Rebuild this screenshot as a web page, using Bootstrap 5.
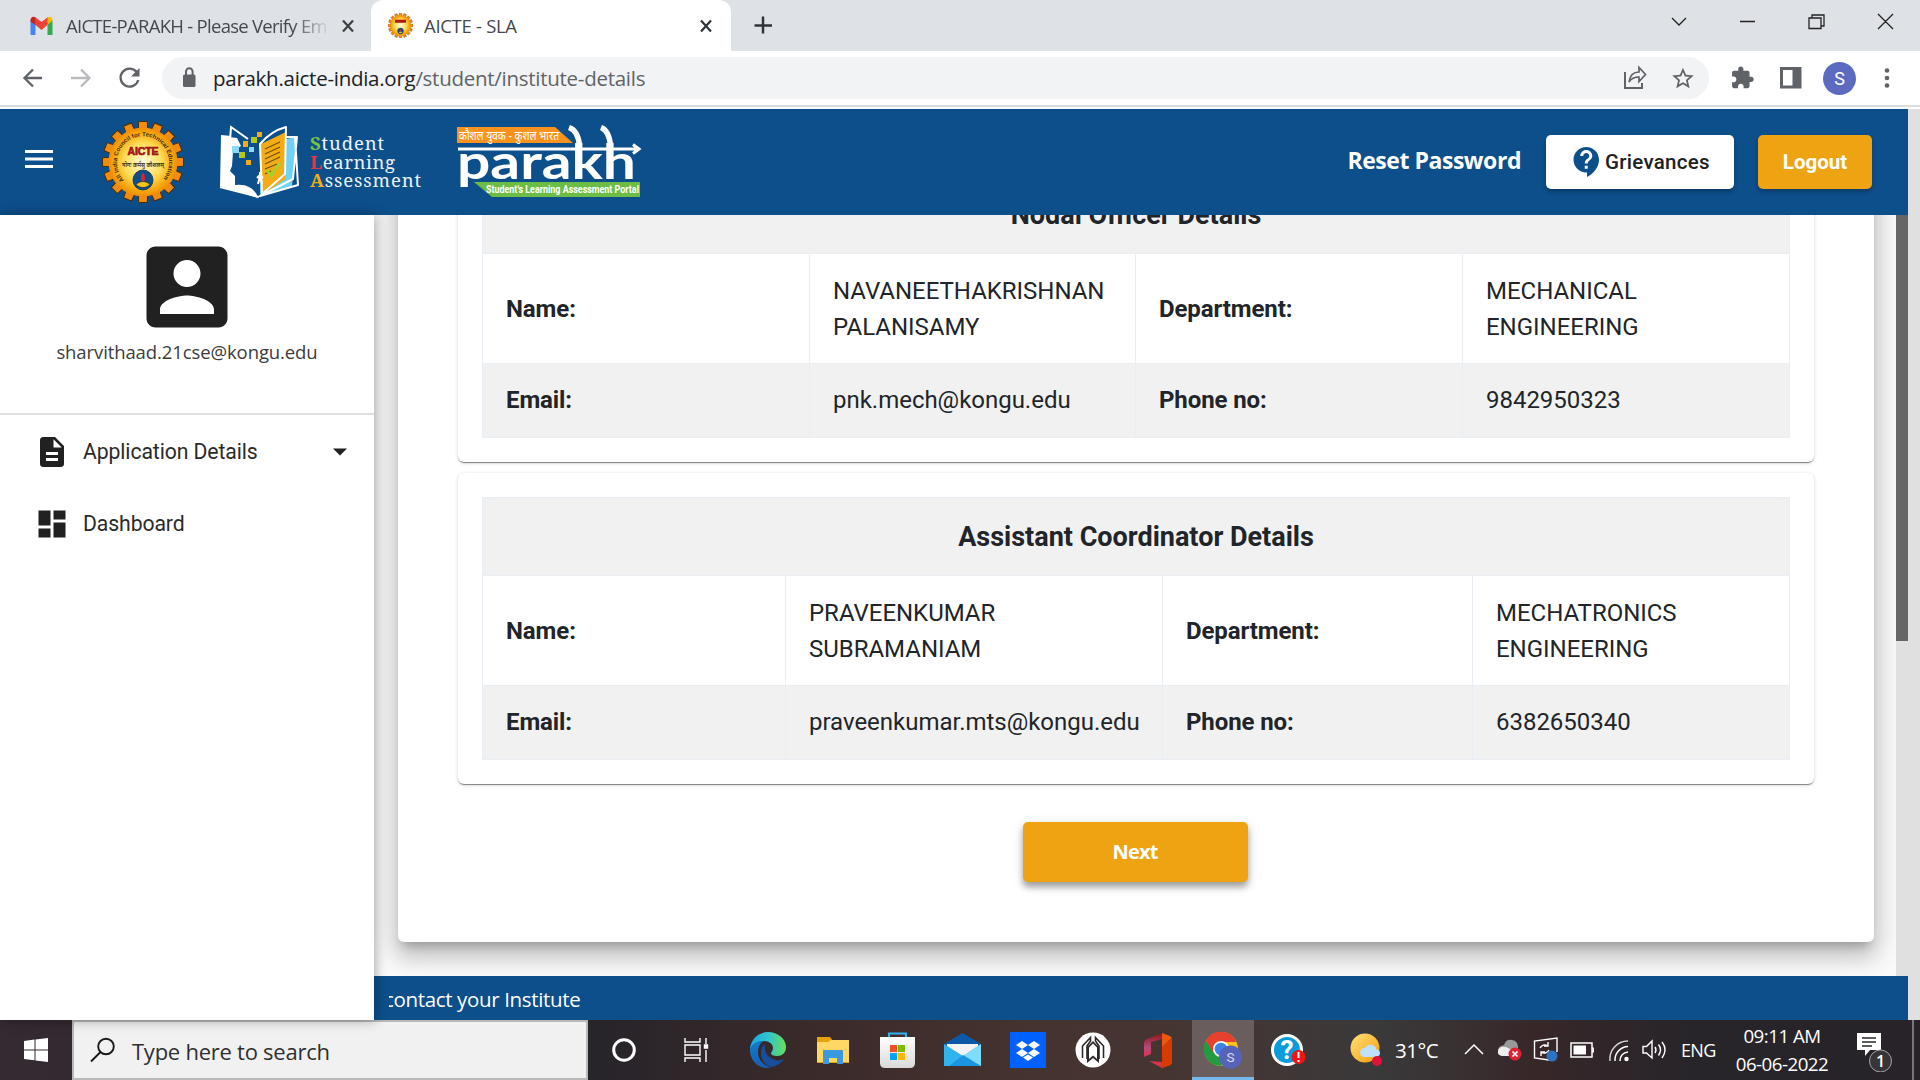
<!DOCTYPE html>
<html lang="en">
<head>
<meta charset="utf-8">
<title>AICTE - SLA</title>
<link href="https://cdn.jsdelivr.net/npm/bootstrap@5.3.0/dist/css/bootstrap.min.css" rel="stylesheet">
<script src="https://cdn.jsdelivr.net/npm/bootstrap@5.3.0/dist/js/bootstrap.bundle.min.js"></script>
<style>
body{width:1920px;height:1080px;overflow:hidden;font-family:Roboto,sans-serif;color:#212529;background:#fff}
svg{display:block;flex:none}
.seg{font-family:"Open Sans","Noto Sans",sans-serif}
.tabs-strip{height:51px;background:#dee1e6;font-size:18.5px;color:#45494d}
.tab-first{width:371px;padding-left:29px}
.tab-first .ttl{width:264px;margin-left:12px;letter-spacing:-.72px;overflow:hidden;-webkit-mask-image:linear-gradient(90deg,#000 86%,transparent)}
.tab-active{width:360px;background:#fff;border-radius:12px 12px 0 0;padding-left:17px}
.tab-active .ttl{margin-left:11px;letter-spacing:-.3px;width:274px}
.toolbar-row{height:54px;padding-left:19px}
.omni{width:1547px;height:42px;border-radius:21px;background:#f1f3f4;margin-left:18px;font-size:20.5px;letter-spacing:-.27px;color:#5f6368}
.omni b{font-weight:400;color:#202124}
.avatar-s{width:33px;height:33px;background:#5c6bc0;color:#fff;font-size:18px;font-family:Roboto,sans-serif}
.page-edge{height:4px;border-top:2px solid #dadcdb}
.page{height:911px}
.app{width:1908px}
.gutter{width:12px;background:#e0e0e0}
.topbar{height:106px;background:#0d4f8b}
.reset{font-size:23px;font-weight:700;color:#fff;letter-spacing:-.45px;padding-bottom:4px}
.hbtn{height:54px;border-radius:5px;border:0;font-size:20.5px;font-weight:500;box-shadow:0 3px 4px rgba(0,0,0,.25)}
.amber{background:#eea312;color:#fff}
.side{width:374px;background:#fff;box-shadow:1px 0 12px rgba(0,0,0,.35);z-index:2}
.profile{height:200px;border-bottom:2px solid #e0e0e0;padding-top:18px}
.profile div{font-size:18.5px;color:#3c3c3c;letter-spacing:-.1px;margin-top:-3px}
.nav-entry{height:72px;padding:2px 0 0 34px;font-size:21.2px;color:#2b2b2b;letter-spacing:-.1px;line-height:1}
.main-col{width:1534px}
.scroller{width:1522px;height:761px;overflow:hidden;background:#fafafa;padding:0 22px 34px 24px}
.sheet{flex:none;background:#fff;border-radius:6px;padding:60px;box-shadow:0 9px 10px -5px rgba(0,0,0,.2),0 15px 21px 2px rgba(0,0,0,.14),0 6px 28px 5px rgba(0,0,0,.12)}
.panel{padding:24px;border-radius:6px;box-shadow:0 2px 1px -1px rgba(0,0,0,.3),0 1px 1px rgba(0,0,0,.2),0 1px 4px rgba(0,0,0,.14)}
.panel+.panel{margin-top:11px}
.info{width:1307px;table-layout:fixed;border-collapse:collapse;font-size:24px;line-height:36px;margin:0;letter-spacing:-.02px}
.info td,.info th{border:1px solid #e9eef5;padding:19px 22px 18px 23px;vertical-align:middle;font-weight:400}
.info th{font-weight:700;letter-spacing:-.1px}
.info .head th{font-size:27px;text-align:center;padding:21px 0 20px;letter-spacing:0}
.info .gray>*{background:#f1f1f1}
.info tr.gray:last-child>*{padding-top:18px;padding-bottom:19px}
.next{width:225px;height:60px;border-radius:5px;border:0;margin-top:38px;font-size:20px;font-weight:700;letter-spacing:-.8px;box-shadow:0 5px 6px rgba(0,0,0,.32),0 3px 14px rgba(0,0,0,.12);transform:translateX(-1px)}
.track{width:12px;background:#e0e0e0}
.thumb{height:426px;background:#666}
.foot{height:44px;background:#0d4f8b;color:#fff;font-size:20.5px;letter-spacing:-.35px;padding:2px 0 0 15px}
.foot .clip{width:400px;overflow:hidden;white-space:nowrap}
.foot .clip span{margin-left:-5px}
.taskbar{height:60px;background:linear-gradient(90deg,#352a31 0,#27242a 31%,#3a2a2a 42%,#45332f 54%,#453533 62%,#3a393a 72%,#372729 80%,#28252a 88%,#272329 100%);color:#fff}
.start{width:72px}
.find{width:516px;height:60px;background:#f1f1f1;border:2px solid #b9b9b9;color:#2f2f2f;font-size:22px;letter-spacing:-.25px;padding-left:16px}
.slot{width:65px;height:60px}
.slot.on{width:62px;margin:0 1px 0 2px;background:#695d5d;border-bottom:3px solid #76b9ed}
.tray{font-size:19px}
.clock{font-size:18.7px;line-height:28px;letter-spacing:-.5px;width:112px}
</style>
</head>
<body>
<svg width="0" height="0" class="position-absolute">
<defs>
<radialGradient id="gold"><stop offset="0" stop-color="#fffbe0"/><stop offset=".55" stop-color="#ffdc55"/><stop offset=".85" stop-color="#f7a70c"/><stop offset="1" stop-color="#ee8c0a"/></radialGradient>
<linearGradient id="edgeA" x1="0" x2="1"><stop offset="0" stop-color="#1ca7dd"/><stop offset=".5" stop-color="#2fc3cf"/><stop offset="1" stop-color="#6be05a"/></linearGradient>
<linearGradient id="edgeB" y2="1" x2="0"><stop stop-color="#0f7dd2"/><stop offset="1" stop-color="#1a5cb0"/></linearGradient>
<linearGradient id="bag" x2="0" y2="1"><stop stop-color="#fff"/><stop offset="1" stop-color="#d9d9d9"/></linearGradient>
<linearGradient id="sun" x2="1" y2="1"><stop stop-color="#ffe27a"/><stop offset="1" stop-color="#f79a0a"/></linearGradient>
<linearGradient id="off" x2="0" y2="1"><stop stop-color="#8e1414"/><stop offset=".6" stop-color="#b54a7c"/><stop offset="1" stop-color="#d8334a"/></linearGradient>
<g id="gear">
<g fill="#f08c10" stroke="#4a2c08" stroke-width="1">
<path id="tooth" d="M-4.800-31-4.300-40.500H4.300L4.800-31z"/>
<use href="#tooth" transform="rotate(22.500)"/><use href="#tooth" transform="rotate(45)"/><use href="#tooth" transform="rotate(67.500)"/><use href="#tooth" transform="rotate(90)"/><use href="#tooth" transform="rotate(112.500)"/><use href="#tooth" transform="rotate(135)"/><use href="#tooth" transform="rotate(157.500)"/><use href="#tooth" transform="rotate(180)"/><use href="#tooth" transform="rotate(202.500)"/><use href="#tooth" transform="rotate(225)"/><use href="#tooth" transform="rotate(247.500)"/><use href="#tooth" transform="rotate(270)"/><use href="#tooth" transform="rotate(292.500)"/><use href="#tooth" transform="rotate(315)"/><use href="#tooth" transform="rotate(337.500)"/>
</g>
<circle r="34.500" fill="url(#gold)"/>
<circle cy="18" r="10" fill="#0d4f8b" stroke="#0a2c52" stroke-width=".8"/>
<path d="M0 10.500c3 4 2 7 1.200 9.500h-2.400C-2 17.500-3 14.500 0 10.500z" fill="#e0202a"/><path d="M-7 22.500c4-4 10-4 14 0-4 4-10 4-14 0z" fill="#f3c21b" stroke="#222" stroke-width=".6"/>
</g>
</defs>
</svg>

<!-- browser tabs -->
<div class="tabs-strip seg d-flex">
  <div class="tab-first d-flex align-items-center">
    <svg width="25" height="20" viewBox="0 0 25 20"><path d="M1.500 19V4l5 3.500V19z" fill="#4285f4"/><path d="M18.500 7.500l5-3.500v15h-5z" fill="#34a853"/><path d="M1.500 4.500C1.500 1 4.500 0 6.500 1.500V9l-5-3.500z" fill="#c5221f"/><path d="M6 1l6.500 5L19 1v7.500L12.500 14 6 8.500z" fill="#ea4335"/><path d="M18.500 1.500c2-1.500 5-.5 5 3l-5 4.500z" fill="#fbbc04"/></svg>
    <div class="ttl text-nowrap">AICTE-PARAKH - Please Verify Em</div>
    <svg class="ms-2" width="20" height="20" stroke="#3c4043" stroke-width="2.200"><path d="M5 4.500 15 15.500M15 4.500 5 15.500"/></svg>
  </div>
  <div class="tab-active d-flex align-items-center">
    <svg width="25" height="25" viewBox="-41 -41 82 82"><use href="#gear"/><path d="M-18-14h36" stroke="#b01818" stroke-width="10"/></svg>
    <div class="ttl text-nowrap">AICTE - SLA</div>
    <svg width="20" height="20" stroke="#303438" stroke-width="2.200"><path d="M3 4.500 13 15.500M13 4.500 3 15.500"/></svg>
  </div>
  <svg width="66" height="51" stroke="#303438" stroke-width="2.500"><path d="M32 16.500V33.500M23.500 25.500H41"/></svg>
  <svg class="ms-auto" width="261" height="51" fill="none" stroke="#222" stroke-width="1.300"><path d="M13 18l7 7 7-7M81 21.500h15M150 18h12v10.500h-12zM153 18v-3h12v11h-3M219 14l15 15M234 14l-15 15"/></svg>
</div>
<!-- address row -->
<div class="toolbar-row d-flex align-items-center seg">
  <svg width="125" height="54" fill="none" stroke="#5f6368" stroke-width="2.300"><path d="M23 27H6M14 18.500 5.500 27 14 35.500"/><path stroke="#b8babd" d="M52 27h17M62 18.500 70.500 27 62 35.500"/><path d="M118 21.500A9 9 0 1 0 119.300 29"/><path d="M120.500 17v8.500H112z" fill="#5f6368" stroke="none"/></svg>
  <div class="omni d-flex align-items-center">
    <svg class="ms-3" width="20" height="42"><rect x="5" y="17.500" width="12.500" height="12.500" rx="1.500" fill="#5f6368"/><path d="M8 18v-3.500a3.300 3.300 0 0 1 6.600 0V18" fill="none" stroke="#5f6368" stroke-width="2"/></svg>
    <div style="margin-left:15px"><b>parakh.aicte-india.org</b>/student/institute-details</div>
    <svg class="ms-auto" width="100" height="42" fill="none" stroke="#5f6368" stroke-width="2"><path d="M16 15v16h17v-5"/><path d="M20 25c1-7 5-10 10-10v-4.500l6.500 7-6.500 7V20c-5 0-7.500 1-10 5z" stroke-width="1.700"/><g transform="translate(61 8.500)" fill="#5f6368" stroke="none"><path d="M22 9.240l-7.190-.62L12 2 9.190 8.630 2 9.240l5.460 4.730L5.820 21 12 17.270 18.180 21l-1.630-7.030L22 9.240zM12 15.400l-3.760 2.270 1-4.280-3.320-2.880 4.380-.38L12 6.100l1.710 4.040 4.380.38-3.320 2.880 1 4.280L12 15.400z" transform="scale(1.080)"/></g></svg>
  </div>
  <svg width="114" height="54" fill="#5f6368"><path transform="translate(21 14.500) scale(1.030)" d="M20.500 11H19V7c0-1.100-.9-2-2-2h-4V3.500C13 2.120 11.880 1 10.500 1S8 2.120 8 3.500V5H4c-1.100 0-1.990.9-1.990 2v3.800H3.500c1.490 0 2.700 1.210 2.700 2.700s-1.210 2.700-2.700 2.700H2V20c0 1.100.9 2 2 2h3.800v-1.500c0-1.490 1.210-2.700 2.700-2.700 1.490 0 2.700 1.210 2.700 2.700V22H17c1.100 0 2-.9 2-2v-4h1.500c1.380 0 2.500-1.120 2.500-2.500S21.880 11 20.500 11z"/><path d="M71 16h21.500v21.500H71zM74 19v15.500h9.500V19z" fill-rule="evenodd"/></svg>
  <div class="avatar-s rounded-circle d-flex align-items-center justify-content-center">S</div>
  <svg width="60" height="54" fill="#5f6368"><circle cx="31" cy="19.500" r="2.300"/><circle cx="31" cy="27" r="2.300"/><circle cx="31" cy="34.500" r="2.300"/></svg>
</div>
<div class="page-edge"></div>

<!-- web page -->
<div class="page d-flex">
  <div class="app d-flex flex-column">
    <header class="topbar d-flex align-items-center">
      <svg width="102" height="106" fill="#fff"><path d="M25 41h28v3H25zM25 48.500h28v3H25zM25 56h28v3H25z"/></svg>
      <svg width="82" height="82" viewBox="-41 -41 82 82"><use href="#gear"/>
        <path id="rim" d="M-19 18A26 26 0 1 1 19 18" fill="none"/>
        <text font-family="Liberation Sans" font-weight="700" font-size="6" fill="#3a2e14"><textPath href="#rim" textLength="118" lengthAdjust="spacingAndGlyphs">All India Council for Technical Education</textPath></text>
        <text x="0" y="-7" text-anchor="middle" font-family="Liberation Sans" font-weight="700" font-size="10.500" fill="#c8141c" stroke="#7d0c10" stroke-width=".6" textLength="31">AICTE</text>
        <text x="0" y="4.500" text-anchor="middle" font-family="Noto Sans Devanagari,Noto Sans,sans-serif" font-weight="600" font-size="7" fill="#3a2e14" textLength="42" lengthAdjust="spacingAndGlyphs">योगः कर्मसु कौशलम्</text>
      </svg>
      <svg width="250" height="90" style="margin-left:33px" viewBox="218 117 250 90">
        <path d="M222 136l16 2 4 8-8 6-1 14-2 5 5 5v9q9-1 14 2 7 3 9 11l-38-12z" fill="#fff"/>
        <path d="M249 139l-17-12-1 14M221 187l39 10M222 136l10 1" fill="none" stroke="#fff" stroke-width="2"/>
        <path d="M262 144l35-7-4 50-32 9z" fill="#71d2f5"/>
        <path d="M262 144l25-12-1 47-24 17z" fill="#f5ac14"/>
        <path d="M261 144q11-13 26-17l-1 47-23 20zM287 137l11 0-4 42-33 17 38-11-3-48" fill="none" stroke="#fff" stroke-width="2" stroke-linejoin="round"/>
        <path d="M266 149l15-7M266 154l15-7M266 159l15-7M266 164l15-7M266 169l12-5M266 174l6-3" stroke="#6d5412" stroke-width="1.300"/>
        <path d="M268 170l4 6 9-13" fill="none" stroke="#9ed52a" stroke-width="2.500"/>
        <path d="M261 172v5M258 178l3-3 3 3M259 184l2-8 2 8" stroke="#fff" stroke-width="2" fill="none"/>
        <path d="M233 146h7v7h-7z" fill="#8cd9f7"/><path d="M250 147h5v5h-5z" fill="#8cd9f7"/><path d="M244 141h5v6h-5zM258 132h5v5h-5zM247 160h5v5h-5z" fill="#f5ac14"/><path d="M252 137h6v6h-6zM240 152h6v6h-6z" fill="#b5c916"/>
        <g font-family="Noto Serif,Liberation Serif,serif" font-size="18.500" fill="#eef3fa">
          <text x="311" y="150" textLength="74" lengthAdjust="spacing"><tspan fill="#7cc242" font-weight="700">S</tspan>tudent</text>
          <text x="311" y="168.500" textLength="85" lengthAdjust="spacing"><tspan fill="#e2364a" font-weight="700">L</tspan>earning</text>
          <text x="311" y="187" textLength="111" lengthAdjust="spacing"><tspan fill="#f5ac14" font-weight="700">A</tspan>ssessment</text>
        </g>
      </svg>
      <svg width="186" height="76" viewBox="457 124 186 76" style="margin-left:-11px">
        <path d="M458 127h98l18 16H458z" fill="#f7931e"/>
        <text x="460" y="139.500" font-family="Noto Sans Devanagari,Noto Sans,sans-serif" font-size="12" fill="#fff" textLength="100" lengthAdjust="spacingAndGlyphs">कौशल युवक - कुशल भारत</text>
        <path d="M475 182h166v15H493z" fill="#6cbd45"/>
        <text x="458" y="178.500" font-family="Lato,sans-serif" font-weight="700" font-size="48" fill="#fff" textLength="179" lengthAdjust="spacingAndGlyphs">parakh</text>
        <path d="M459 149h179M634 144.500l6 4.500-6 4.500" fill="none" stroke="#fff" stroke-width="3"/>
        <path d="M570 127.500q9 3 10.500 18M602 127.500q8 3 9.500 18" fill="none" stroke="#fff" stroke-width="5.500"/>
        <text x="487" y="193" font-family="Roboto,sans-serif" font-weight="700" font-size="10.500" fill="#fff" textLength="153" lengthAdjust="spacingAndGlyphs">Student's Learning Assessment Portal</text>
      </svg>
      <div class="reset seg ms-auto">Reset Password</div>
      <button class="hbtn bg-white d-flex align-items-center p-0" style="width:188px;margin-left:25px;color:#212121"><svg style="margin-left:23px" width="36" height="36" viewBox="0 0 24 24" fill="#0d4f8b"><path d="M11.500 2C6.810 2 3 5.810 3 10.500S6.810 19 11.500 19h.5v3c4.860-2.340 8-7 8-11.500C20 5.810 16.190 2 11.500 2zm1 14.500h-2v-2h2v2zm0-3.500h-2c0-3.250 3-3 3-5 0-1.100-.9-2-2-2s-2 .9-2 2h-2c0-2.210 1.790-4 4-4s4 1.790 4 4c0 2.500-3 2.750-3 5z"/></svg><span style="letter-spacing:.28px">Grievances</span></button>
      <button class="hbtn amber p-0 fw-bold" style="width:114px;margin:0 36px 0 24px">Logout</button>
    </header>
    <div class="d-flex flex-grow-1">
      <aside class="side">
        <div class="profile d-flex flex-column align-items-center">
          <svg width="108" height="108" viewBox="0 0 24 24" fill="#212121"><path d="M3 5v14c0 1.100.89 2 2 2h14c1.100 0 2-.9 2-2V5c0-1.100-.9-2-2-2H5c-1.110 0-2 .9-2 2zm12 4c0 1.660-1.340 3-3 3s-3-1.340-3-3 1.340-3 3-3 3 1.340 3 3zm-9 8c0-2 4-3.100 6-3.100s6 1.100 6 3.100v1H6v-1z"/></svg>
          <div class="seg">sharvithaad.21cse@kongu.edu</div>
        </div>
        <nav>
          <div class="nav-entry d-flex align-items-center"><svg width="36" height="36" viewBox="0 0 24 24" fill="#212121"><path d="M14 2H6c-1.100 0-1.990.9-1.990 2L4 20c0 1.100.89 2 1.990 2H18c1.100 0 2-.9 2-2V8l-6-6zm2 16H8v-2h8v2zm0-4H8v-2h8v2zm-3-5V3.500L18.500 9H13z"/></svg><span style="margin-left:13px">Application Details</span><svg class="ms-auto" style="margin-right:26px" width="16" height="8"><path d="M1 .5h14L8 7.500z" fill="#212121"/></svg></div>
          <div class="nav-entry d-flex align-items-center"><svg width="36" height="36" viewBox="0 0 24 24" fill="#212121"><path d="M3 13h8V3H3v10zm0 8h8v-6H3v6zm10 0h8V11h-8v10zm0-18v6h8V3h-8z"/></svg><span style="margin-left:13px">Dashboard</span></div>
        </nav>
      </aside>
      <div class="main-col d-flex flex-column">
        <div class="d-flex">
          <main class="scroller d-flex flex-column justify-content-end">
            <div class="sheet">
              <section class="panel">
                <table class="info">
                  <colgroup><col style="width:327px"><col style="width:326px"><col style="width:327px"><col style="width:327px"></colgroup>
                  <tr class="head gray"><th colspan="4">Nodal Officer Details</th></tr>
                  <tr><th>Name:</th><td>NAVANEETHAKRISHNAN PALANISAMY</td><th>Department:</th><td>MECHANICAL<br>ENGINEERING</td></tr>
                  <tr class="gray"><th>Email:</th><td>pnk.mech@kongu.edu</td><th>Phone no:</th><td>9842950323</td></tr>
                </table>
              </section>
              <section class="panel">
                <table class="info">
                  <colgroup><col style="width:303px"><col style="width:377px"><col style="width:310px"><col style="width:317px"></colgroup>
                  <tr class="head gray"><th colspan="4">Assistant Coordinator Details</th></tr>
                  <tr><th>Name:</th><td>PRAVEENKUMAR<br>SUBRAMANIAM</td><th>Department:</th><td>MECHATRONICS<br>ENGINEERING</td></tr>
                  <tr class="gray"><th>Email:</th><td>praveenkumar.mts@kongu.edu</td><th>Phone no:</th><td>6382650340</td></tr>
                </table>
              </section>
              <button class="next amber seg d-block mx-auto">Next</button>
            </div>
          </main>
          <div class="track"><div class="thumb"></div></div>
        </div>
        <footer class="foot seg d-flex align-items-center"><div class="clip"><span>contact your Institute</span></div></footer>
      </div>
    </div>
  </div>
  <div class="gutter"></div>
</div>

<!-- desktop taskbar -->
<div class="taskbar seg d-flex align-items-center">
  <div class="start d-flex justify-content-center"><svg width="24" height="24" fill="#fff"><path d="M0 3l10.500-1.500v10H0zM11.500 1.400 24 0v11.500H11.500zM0 12.500h10.500v9.800L0 21zM11.500 12.500H24V24l-12.500-1.500z"/></svg></div>
  <div class="find d-flex align-items-center"><svg width="26" height="26" fill="none" stroke="#1b1b1b" stroke-width="1.900"><circle cx="16" cy="9.500" r="7.800"/><path d="M10.500 15 1 24.500"/></svg><span style="margin-left:16px;padding-top:2px">Type here to search</span></div>
  <div class="slot d-flex align-items-center justify-content-center" style="width:72px"><svg width="26" height="26"><circle cx="13" cy="13" r="10.300" fill="none" stroke="#fff" stroke-width="3"/></svg></div>
  <div class="slot d-flex align-items-center justify-content-center" style="width:75px"><svg width="26" height="26" fill="none" stroke="#fff" stroke-width="1.400" style="margin-left:-2px"><path d="M1 1v4h15V1M1 25v-4h15v4M1 8h15v10H1zM22 1v6M22 13v12"/><path d="M20.500 8h3v3h-3z" fill="#fff"/></svg></div>
  <div class="slot d-flex align-items-center justify-content-center"><svg width="36" height="36" viewBox="0 0 36 36"><path d="M18 0c10 0 18 7 18 15 0 6-4 9-9 9-4 0-6-1-6-3 0-1 2-2 2-5 0-4-4-7-9-7S2 12 0 18C0 8 8 0 18 0z" fill="url(#edgeA)"/><path d="M0 18C2 11 8 8.500 14 9c-4 2-6 6-6 11 0 8 6 14 13 15.500C9 38 0 29 0 18z" fill="url(#edgeB)"/><path d="M15 12c-7 5-5 20 6 23 6-1 10-4 13-8-4 2-9 2-13-1-5-3-7-8-6-14z" fill="#174f9c"/></svg></div>
  <div class="slot d-flex align-items-center justify-content-center"><svg width="32" height="27"><path d="M0 0h13l3 4h16v22H0z" fill="#e5a50a"/><path d="M0 5h11l3-2h18v22H0z" fill="#ffd765"/><path d="M6 27V14q0-1 1-1h18q1 0 1 1v13h-6v-6h-8v6z" fill="#3b99e0"/></svg></div>
  <div class="slot d-flex align-items-center justify-content-center"><svg width="35" height="36"><path d="M9 8V1.500h17V8" fill="none" stroke="#31b1f0" stroke-width="2.200"/><path d="M0 5h35v26q0 5-5 5H5q-5 0-5-5z" fill="url(#bag)"/><path d="M10 13h7v7h-7z" fill="#f25022"/><path d="M18 13h7v7h-7z" fill="#7fba00"/><path d="M10 21h7v7h-7z" fill="#00a4ef"/><path d="M18 21h7v7h-7z" fill="#ffb900"/></svg></div>
  <div class="slot d-flex align-items-center justify-content-center"><svg width="37" height="34"><path d="M0 11 18.500 0 37 11v9H0z" fill="#0b59a8"/><path d="M3 11h31v12H3z" fill="#f3f3f3"/><path d="M0 11l19 12L37 11v22H0z" fill="#31b4ee"/><path d="M37 11 19 23l17 10h1z" fill="#7fdcfb"/><path d="M19 22l18 11H5z" fill="#1c95e0"/></svg></div>
  <div class="slot d-flex align-items-center justify-content-center"><svg width="36" height="36"><path d="M0 0h36v36H0z" fill="#0061fe"/><path fill="#fff" d="M12 9l6 4-6 4-6-4zM24 9l6 4-6 4-6-4zM12 17l6 4-6 4-6-4zM24 17l6 4-6 4-6-4zM18 22.500l5 3-5 3.500-5-3.500z"/></svg></div>
  <div class="slot d-flex align-items-center justify-content-center"><svg width="36" height="36"><circle cx="18" cy="18" r="17.500" fill="#fff"/><path d="M7.500 26V14L15.500 5.500V9L12 14v13M28.500 26V14l-8-8.500V9l3.500 5v13" fill="none" stroke="#2c2828" stroke-width="1.600"/><path d="M12 15l6-6 6 6v16l-6-5-6 5z" fill="#2c2828"/><path d="M14 27V15.500l4-4 4 4V27l-4-3.500z" fill="#fff"/></svg></div>
  <div class="slot d-flex align-items-center justify-content-center"><svg width="28" height="35"><path d="M18 0 3 6Q0 7 0 11v13l7-3V9l11-3z" fill="url(#off)"/><path d="M18 0l8 3q2 1 2 4v21q0 3-2 4l-8 3z" fill="#eb5a0c"/><path d="M18 14l10-10v23q0 4-2 5l-8 3z" fill="#d83b01"/><path d="M5 28l13 1v6z" fill="#d8334a"/></svg></div>
  <div class="slot on d-flex align-items-center justify-content-center"><svg width="40" height="38" viewBox="0 0 40 38" style="margin-top:3px"><circle cx="18" cy="18" r="17" fill="#fbc116"/><path d="M3 9.500A17 17 0 0 0 18 35l6-12-12-1z" fill="#249a41"/><path d="M3 9.500 11 23l7-12h15l-.5-2A17 17 0 0 0 3 9.500z" fill="#e8402f"/><circle cx="18" cy="18" r="8" fill="#fff"/><circle cx="18" cy="18" r="6.300" fill="#3b82ee"/><circle cx="27.500" cy="26" r="11.500" fill="#5663b8"/><text x="27.500" y="31" text-anchor="middle" font-family="Roboto" font-size="13.500" fill="#d8dcf3">S</text></svg></div>
  <div class="slot d-flex align-items-center justify-content-center"><svg width="36" height="36"><circle cx="17" cy="18" r="14.500" fill="#0a9bdb" stroke="#fff" stroke-width="3"/><text x="17" y="27" text-anchor="middle" font-family="Roboto" font-weight="700" font-size="26" fill="#fff">?</text><circle cx="28.500" cy="25" r="7" fill="#f01414"/><path d="M28.500 20v6M28.500 28v2" stroke="#fff" stroke-width="2"/></svg></div>
  <div class="tray d-flex align-items-center" style="margin-left:29px">
    <svg width="34" height="36"><circle cx="16" cy="16" r="14.500" fill="url(#sun)"/><path d="M16 25q-5 0-5-5 1-4 5-4 2-4 7-3 4 1 4 4 4 1 4 4 0 4-5 4z" fill="#bfe0fb"/><circle cx="28" cy="29" r="5" fill="#dc143c"/></svg>
    <span style="margin-left:12px;width:68px;letter-spacing:-.5px;font-size:20.500px">31°C</span>
    <svg width="30" height="20" fill="none" stroke="#fff" stroke-width="1.500"><path d="M2 14 11 5l9 9"/></svg>
    <svg width="40" height="28"><g transform="translate(3 0)"><path d="M8 20q-6 0-6-5t6-6q2-6 8-5 6 1 6 7v9z" fill="#999"/><path d="M6 20q-5-1-4-5 1-5 8-4l12 6v3z" fill="#eee"/><circle cx="19" cy="18" r="6.500" fill="#dd2233"/><path d="M16.500 15.500l5 5M21.500 15.500l-5 5" stroke="#fff" stroke-width="1.700"/></g></svg>
    <svg width="37" height="28" fill="none" stroke="#fff" stroke-width="1.400"><path d="M16 24 1.500 22V5L24 2v14"/><path d="M7 12q3-5 8-2M15 6v4h-4M16 14q-3 5-8 2M8 20v-4h4"/><circle cx="19" cy="20" r="5.500" fill="#2d73c2" stroke="none"/></svg>
    <svg width="38" height="20"><path d="M1 3h21v14H1z" fill="none" stroke="#fff" stroke-width="1.500"/><path d="M3.500 5.500H16v9H3.500zM22 7.500h2v5h-2z" fill="#fff"/></svg>
    <svg width="34" height="26" fill="none" stroke="#fff" stroke-width="1.500"><path d="M2 24A18 18 0 0 1 20 4" opacity=".8"/><path d="M7 24A13.500 13.500 0 0 1 20 9.500M12 24a8.500 8.500 0 0 1 8-9"/><circle cx="18.500" cy="22" r="1.500" fill="#fff"/></svg>
    <svg width="39" height="22" fill="none" stroke="#fff" stroke-width="1.400"><path d="M1 7.500h3.500L10 2v17l-5.500-5H1zM13 8q2 3 0 6M16.500 5.500q4 5 0 11M20 3q6 7.500 0 16"/></svg>
    <span style="width:45px;font-size:18px;letter-spacing:-.7px">ENG</span>
    <div class="clock text-center"><div>09:11 AM</div><div>06-06-2022</div></div>
    <svg width="40" height="44" style="margin-left:18px"><path d="M1 5h24v17h-11l-5 6v-6H1z" fill="#fff"/><path d="M6 10h14M6 14h14M6 18h10" stroke="#2b272b" stroke-width="1.300"/><circle cx="24.500" cy="33" r="11" fill="#3b383a" fill-opacity=".85" stroke="#a5a5a5"/><text x="24.500" y="39" text-anchor="middle" font-family="Open Sans" font-weight="600" font-size="16" fill="#fff">1</text></svg>
  </div>
  <div class="ms-auto" style="width:8px;height:60px;border-left:2px solid #777"></div>
</div>
</body>
</html>
